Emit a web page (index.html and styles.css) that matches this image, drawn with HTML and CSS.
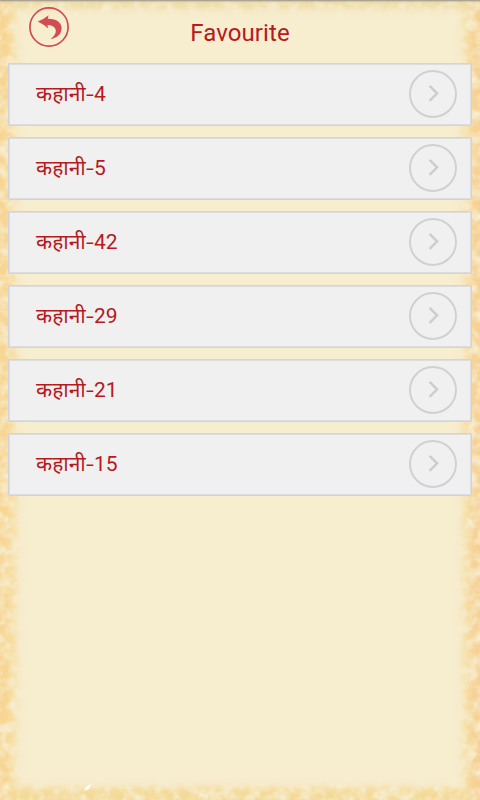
FILE: index.html
```html
<!DOCTYPE html>
<html lang="hi">
<head>
    <meta charset="UTF-8">
    <meta name="viewport" content="width=device-width, initial-scale=1.0">
    <title>Favourite</title>
    <link rel="stylesheet" href="styles.css">
</head>
<body>

<!-- Parchment border -->
<svg class="paper" width="480" height="800" viewBox="0 0 480 800" aria-hidden="true">
    <defs>
        <filter id="stain" x="0" y="0" width="480" height="800" filterUnits="userSpaceOnUse" color-interpolation-filters="sRGB">
            <feGaussianBlur in="SourceGraphic" stdDeviation="3.5" result="edge"/>
            <feTurbulence type="fractalNoise" baseFrequency="0.09" numOctaves="5" seed="7"/>
            <feColorMatrix values="0 0 0 0 0  0 0 0 0 0  0 0 0 0 0  2.4 0 0 0 -0.5" result="noise"/>
            <feComposite in="edge" in2="noise" operator="in"/>
        </filter>
        <linearGradient id="shade" x1="0" y1="0" x2="0" y2="1">
            <stop offset="0" stop-color="#8f8a80"/>
            <stop offset="0.4" stop-color="#c0b79e" stop-opacity="0.5"/>
            <stop offset="1" stop-color="#f7edcf" stop-opacity="0"/>
        </linearGradient>
    </defs>
    <g filter="url(#stain)">
        <rect x="-20" y="-20" width="37" height="840" fill="#f6dfa6"/>
        <rect x="462" y="-20" width="38" height="840" fill="#f6dfa6"/>
        <rect x="-20" y="-20" width="520" height="29" fill="#eedca6"/>
        <rect x="-20" y="787" width="520" height="33" fill="#f4da98"/>
        <rect x="-20" y="-20" width="30" height="840" fill="#f7d593"/>
        <rect x="470" y="-20" width="30" height="840" fill="#f6d195"/>
    </g>
    <rect width="480" height="4" fill="url(#shade)"/>
    <path d="M84 791L86 787L91 784L89 789Z" fill="#fff"/>
</svg>

<!-- Shared icons -->
<svg class="sprite" aria-hidden="true">
    <symbol id="next" viewBox="0 0 48 48">
        <circle cx="24" cy="24" r="23" fill="none" stroke="#d0d0d0" stroke-width="1.9"/>
        <path d="M20.6 15.8L28.1 23.3L20.6 30.8" fill="none" stroke="#cdcdcd" stroke-width="2.4"/>
    </symbol>
</svg>

<header class="header">
    <a class="back" href="#" aria-label="Back">
        <svg width="40" height="40" viewBox="0 0 40 40">
            <circle cx="20" cy="20" r="19.1" fill="none" stroke="#d34b53" stroke-width="1.7"/>
            <path d="M8.8 14.5Q14.5 12.3 19.6 8.2L18.8 11.8C27.5 11.6 32.8 15.8 32.6 21.6C32.3 27.6 28.2 31 21.5 32.2C26 28.8 27.6 25.4 26.4 22.1C25.1 18.9 22 18 18.4 17.9L19.2 21.6Q14.5 17.2 8.8 14.5Z" fill="#d34b53"/>
        </svg>
    </a>
    <h1>Favourite</h1>
</header>

<ul class="list">
    <li class="item"><span>कहानी<i class="dash">-</i>4</span><svg class="arrow"><use href="#next"/></svg></li>
    <li class="item"><span>कहानी<i class="dash">-</i>5</span><svg class="arrow"><use href="#next"/></svg></li>
    <li class="item"><span>कहानी<i class="dash">-</i>42</span><svg class="arrow"><use href="#next"/></svg></li>
    <li class="item"><span>कहानी<i class="dash">-</i>29</span><svg class="arrow"><use href="#next"/></svg></li>
    <li class="item"><span>कहानी<i class="dash">-</i>21</span><svg class="arrow"><use href="#next"/></svg></li>
    <li class="item"><span>कहानी<i class="dash">-</i>15</span><svg class="arrow"><use href="#next"/></svg></li>
</ul>

</body>
</html>
```
FILE: styles.css
```css
* {
    box-sizing: border-box;
}
body {
    margin: 0;
    height: 800px;
    overflow: hidden;
    background-color: #f7edcf;
    color: #b7191d;
    font-family: Roboto, "Noto Sans", sans-serif;
}
.paper {
    position: absolute;
    top: 0;
    left: 0;
    z-index: -1;
}
.sprite {
    display: none;
}
.header {
    display: grid;
    grid-template-columns: 80px 1fr 80px;
    height: 63px;
}
.back {
    margin: 7px 0 0 29px;
    height: 40px;
}
.back svg {
    display: block;
}
h1 {
    margin: 0;
    padding-top: 1px;
    font-size: 24px;
    font-weight: 400;
    letter-spacing: 0.1px;
    line-height: 64px;
    text-align: center;
}
.list {
    display: flex;
    flex-direction: column;
    gap: 11px;
    margin: 0;
    padding: 0 8px;
    list-style: none;
}
.item {
    display: flex;
    align-items: center;
    justify-content: space-between;
    height: 63px;
    padding: 0 14px 2px 27px;
    border: 1px solid #d2d4d7;
    border-radius: 1px;
    background-color: #f0f0f0;
    box-shadow: inset 0 0 0 1px #dcdde0;
    font-size: 21px;
    line-height: 30px;
}
.dash {
    display: inline-block;
    margin: 0 1.2px;
    font-style: normal;
    transform: scaleX(1.35);
}
.arrow {
    width: 48px;
    height: 48px;
}
```
